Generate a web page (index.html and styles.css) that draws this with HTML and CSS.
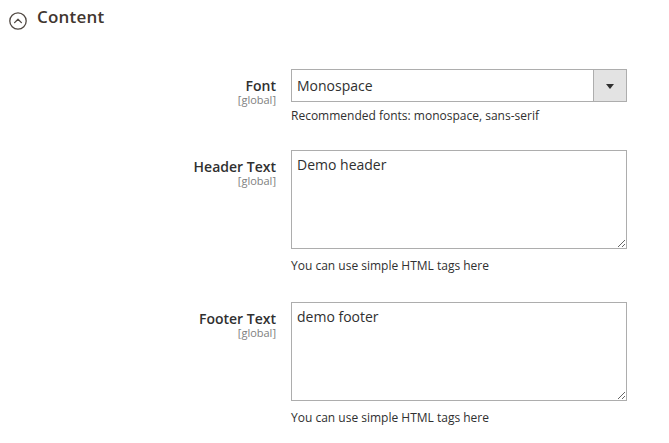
FILE: index.html
```html
<!DOCTYPE html>
<html lang="en">
<head>
<meta charset="utf-8">
<title>Content</title>
<link rel="stylesheet" href="styles.css">
</head>
<body>
<section class="section">
  <div class="section-title">
    <svg class="collapse-icon" width="18" height="18" viewBox="0 0 18 18" aria-hidden="true">
      <circle cx="9" cy="9" r="8.2" fill="none" stroke="#514943" stroke-width="1.3"/>
      <path d="M5.6 10.6 L9 7.2 L12.4 10.6" fill="none" stroke="#514943" stroke-width="1.3" stroke-linecap="round" stroke-linejoin="round"/>
    </svg>
    <span class="title-text">Content</span>
  </div>

  <div class="form">
    <div class="row row-select">
      <div class="label">
        <span class="label-text">Font</span>
        <span class="scope">[global]</span>
      </div>
      <div class="control">
        <div class="select">
          <span class="select-value">Monospace</span>
          <span class="select-arrow"><span class="triangle"></span></span>
        </div>
        <p class="note note-select">Recommended fonts: monospace, sans-serif</p>
      </div>
    </div>

    <div class="row">
      <div class="label">
        <span class="label-text">Header Text</span>
        <span class="scope">[global]</span>
      </div>
      <div class="control">
        <textarea class="textarea">Demo header</textarea>
        <p class="note">You can use simple HTML tags here</p>
      </div>
    </div>

    <div class="row">
      <div class="label">
        <span class="label-text">Footer Text</span>
        <span class="scope">[global]</span>
      </div>
      <div class="control">
        <textarea class="textarea">demo footer</textarea>
        <p class="note">You can use simple HTML tags here</p>
      </div>
    </div>
  </div>
</section>
</body>
</html>
```

FILE: styles.css
```css
* { box-sizing: border-box; }

html, body {
  margin: 0;
  padding: 0;
  background: #ffffff;
}

body {
  font-family: "Open Sans", "Noto Sans", sans-serif;
  color: #303030;
  width: 669px;
  height: 443px;
  overflow: hidden;
}

.section-title {
  display: flex;
  align-items: center;
  gap: 10px;
  padding: 4px 0 0 9px;
  height: 34px;
  font-size: 17px;
  font-weight: 600;
  color: #41362f;
}

.title-text {
  margin-bottom: 5px;
  letter-spacing: 0.2px;
}

.collapse-icon {
  flex: none;
  margin-top: 4px;
}

.form {
  display: flex;
  flex-direction: column;
  padding-top: 35px;
}

.row {
  display: grid;
  grid-template-columns: 276px 336px;
  column-gap: 15px;
  margin-bottom: 28px;
}

.row-select {
  margin-bottom: 26px;
}

.label {
  display: flex;
  flex-direction: column;
  align-items: flex-end;
  padding-top: 8px;
  text-align: right;
}

.label-text {
  font-size: 14px;
  font-weight: 600;
  line-height: 17px;
  color: #303030;
}

.scope {
  font-size: 11px;
  line-height: 11px;
  color: #808080;
}

.control {
  display: flex;
  flex-direction: column;
}

.select {
  display: flex;
  height: 33px;
  border: 1px solid #adadad;
  background: #ffffff;
}

.select-value {
  flex: 1;
  font-size: 14px;
  line-height: 19px;
  padding: 6px 5px;
  color: #303030;
}

.select-arrow {
  flex: none;
  width: 33px;
  display: flex;
  align-items: center;
  justify-content: center;
  background: #e3e3e3;
  border-left: 1px solid #adadad;
}

.triangle {
  width: 0;
  height: 0;
  border-left: 4px solid transparent;
  border-right: 4px solid transparent;
  border-top: 5px solid #303030;
  margin-top: 1px;
}

.textarea {
  display: block;
  width: 336px;
  height: 99px;
  margin: 0;
  border: 1px solid #adadad;
  border-radius: 0;
  padding: 4px 5px;
  font-family: "Open Sans", "Noto Sans", sans-serif;
  font-size: 14px;
  line-height: 19px;
  color: #303030;
  background: #ffffff;
  resize: vertical;
  outline: none;
}

.note {
  margin: 8px 0 0;
  font-size: 12px;
  line-height: 17px;
  color: #303030;
}

.note-select {
  margin-top: 5px;
}
```
